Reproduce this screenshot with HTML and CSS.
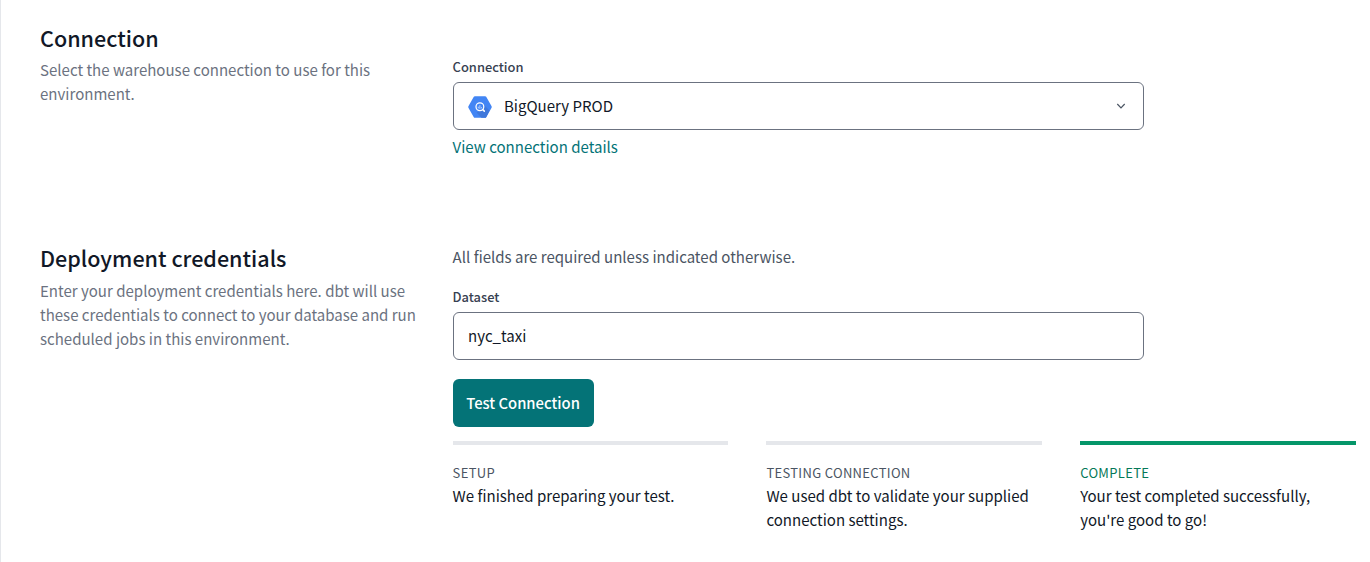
FILE: index.html
```html
<!DOCTYPE html>
<html lang="en">
<head>
<meta charset="utf-8">
<title>Environment settings</title>
<link rel="stylesheet" href="styles.css">
</head>
<body>
<main class="page">
  <section class="section section-connection">
    <div class="intro">
      <h2 class="title">Connection</h2>
      <p class="description">Select the warehouse connection to use for this<br>environment.</p>
    </div>
    <div class="fields">
      <label class="label">Connection</label>
      <div class="control">
        <svg class="logo" width="24" height="22" viewBox="0 0 24 22">
          <path d="M6.9 0.2h10.200c.5 0 .9.2 1.100.6l5.400 9.500c.2.500.2.900 0 1.400l-5.400 9.500c-.2.400-.6.600-1.100.600H6.900c-.5 0-.9-.2-1.100-.6L.4 11.700c-.2-.5-.2-.9 0-1.400l5.400-9.500c.2-.4.6-.6 1.100-.6z" fill="#4285f4"/>
          <path d="M15.300 8.300l6.200 6.200-3.300 6.700c-.2.400-.6.600-1.100.600h-3.600l-5-5.300 3.300-1.500z" fill="#3f78db"/>
          <circle cx="11.900" cy="10.700" r="3.900" fill="#4285f4" stroke="#fff" stroke-width="1.250"/>
          <path d="M10.300 10.700v1.700M11.900 9.200v3.700M13.500 11.200v1.100" stroke="#c5daff" stroke-width=".9"/>
          <path d="M14.800 13.600l1.500 1.500" stroke="#fff" stroke-width="1.500" stroke-linecap="round"/>
        </svg>
        <span class="value">BigQuery PROD</span>
        <svg class="chevron" width="10" height="8" viewBox="0 0 10 8"><path d="M1.300 2l3.700 3.900L8.700 2" fill="none" stroke="#4b5563" stroke-width="1.200"/></svg>
      </div>
      <a class="link">View connection details</a>
    </div>
  </section>
  <section class="section section-credentials">
    <div class="intro">
      <h2 class="title">Deployment credentials</h2>
      <p class="description">Enter your deployment credentials here. dbt will use<br>these credentials to connect to your database and run<br>scheduled jobs in this environment.</p>
    </div>
    <div class="fields">
      <p class="note">All fields are required unless indicated otherwise.</p>
      <label class="label">Dataset</label>
      <div class="control"><span class="value">nyc_taxi</span></div>
      <button class="button">Test Connection</button>
      <div class="steps">
        <div class="step"><div class="step-name">SETUP</div><p class="step-text">We finished preparing your test.</p></div>
        <div class="step"><div class="step-name">TESTING CONNECTION</div><p class="step-text">We used dbt to validate your supplied<br>connection settings.</p></div>
        <div class="step step-complete"><div class="step-name">COMPLETE</div><p class="step-text">Your test completed successfully,<br>you're good to go!</p></div>
      </div>
    </div>
  </section>
</main>
</body>
</html>
```
FILE: styles.css
```css
* { box-sizing: border-box; }
body { margin: 0; background: #fff; overflow: hidden; }
.page {
  height: 562px;
  border-left: 1px solid #e5e7eb;
  padding-left: 39px;
  font: 400 15.040px/24px "Noto Sans CJK SC", sans-serif;
  color: #111827;
  white-space: nowrap;
}
h2, p { margin: 0; }
.section { display: grid; grid-template-columns: 412.600px 903.400px; }
.section-connection { height: 220px; padding-top: 22px; }
.section-credentials { padding-top: 22px; }
.title { font-size: 21.560px; font-weight: 500; line-height: 32px; }
.description { margin-top: 5px; color: #6b7280; }
.section-connection .description { margin-top: 4px; }
.fields { display: flex; flex-direction: column; align-items: flex-start; }
.label { font-size: 12.900px; font-weight: 500; line-height: 20px; color: #374151; }
.section-connection .label { margin-top: 35px; }
.control {
  display: flex;
  align-items: center;
  width: 691px;
  height: 48px;
  margin-top: 5px;
  padding: 0 17px 0 14.400px;
  border: 1px solid #6b7280;
  border-radius: 6px;
}
.logo { margin: 1px 12px 0 0; }
.chevron { margin-left: auto; }
.link { margin-top: 5px; color: #047377; }
.note { margin-top: 3px; color: #4b5563; }
.section-credentials .label { margin-top: 18px; }
.button {
  width: 141px;
  height: 48px;
  margin-top: 19px;
  padding: 0;
  border: 0;
  border-radius: 6px;
  background: #047377;
  color: #fff;
  font: inherit;
  font-size: 14.800px;
  font-weight: 500;
}
.steps { display: grid; grid-template-columns: repeat(3, 275.800px); gap: 38px; margin-top: 14px; }
.step { border-top: 4px solid #e5e7eb; padding-top: 18px; }
.step-name { font-size: 13px; line-height: 20px; letter-spacing: .32px; color: #4b5563; }
.step-text { margin-top: 1px; }
.step-complete { border-color: #059669; }
.step-complete .step-name { color: #047857; }
```
